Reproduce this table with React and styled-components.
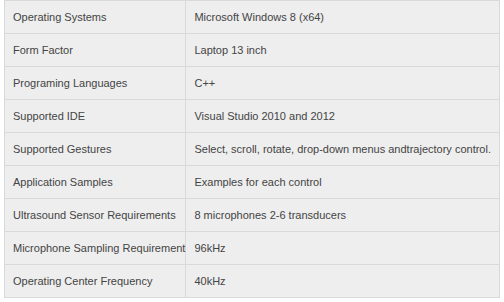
import React from 'react';
import styled, { createGlobalStyle } from 'styled-components';

const Global = createGlobalStyle`
  html, body {
    margin:0;
    padding:0;
    background:#fff;
  }
`;

const Wrap = styled.div`
  padding:0 4px 0 4px;
  width:496px;
`;

const Table = styled.table`
  width:496px;
  border-collapse:collapse;
  background:#eeeeee;
  border:1px solid #d6d6d6;
  font-family:"Liberation Sans", Arial, sans-serif;
  font-size:11px;
  color:#444;
`;

const Cell = styled.td`
  height:32px;
  padding:0 0 0 ${p => p.$first ? 8 : 8}px;
  border:1px solid #d9d9d9;
  vertical-align:middle;
  width:${p => p.$first ? '172px' : 'auto'};
  white-space:nowrap;
`;

const rows = [
  ['Operating Systems', 'Microsoft Windows 8 (x64)'],
  ['Form Factor', 'Laptop 13 inch'],
  ['Programing Languages', 'C++'],
  ['Supported IDE', 'Visual Studio 2010 and 2012'],
  ['Supported Gestures', 'Select, scroll, rotate, drop-down menus andtrajectory control.'],
  ['Application Samples', 'Examples for each control'],
  ['Ultrasound Sensor Requirements', '8 microphones 2-6 transducers'],
  ['Microphone Sampling Requirement', '96kHz'],
  ['Operating Center Frequency', '40kHz'],
];

const App = () => {
  return <>
    <Global />
    <Wrap>
      <Table>
        <tbody>
          {rows.map(([k, v]) => (
            <tr key={k}>
              <Cell $first>{k}</Cell>
              <Cell>{v}</Cell>
            </tr>
          ))}
        </tbody>
      </Table>
    </Wrap>
  </>
}

export default App;
